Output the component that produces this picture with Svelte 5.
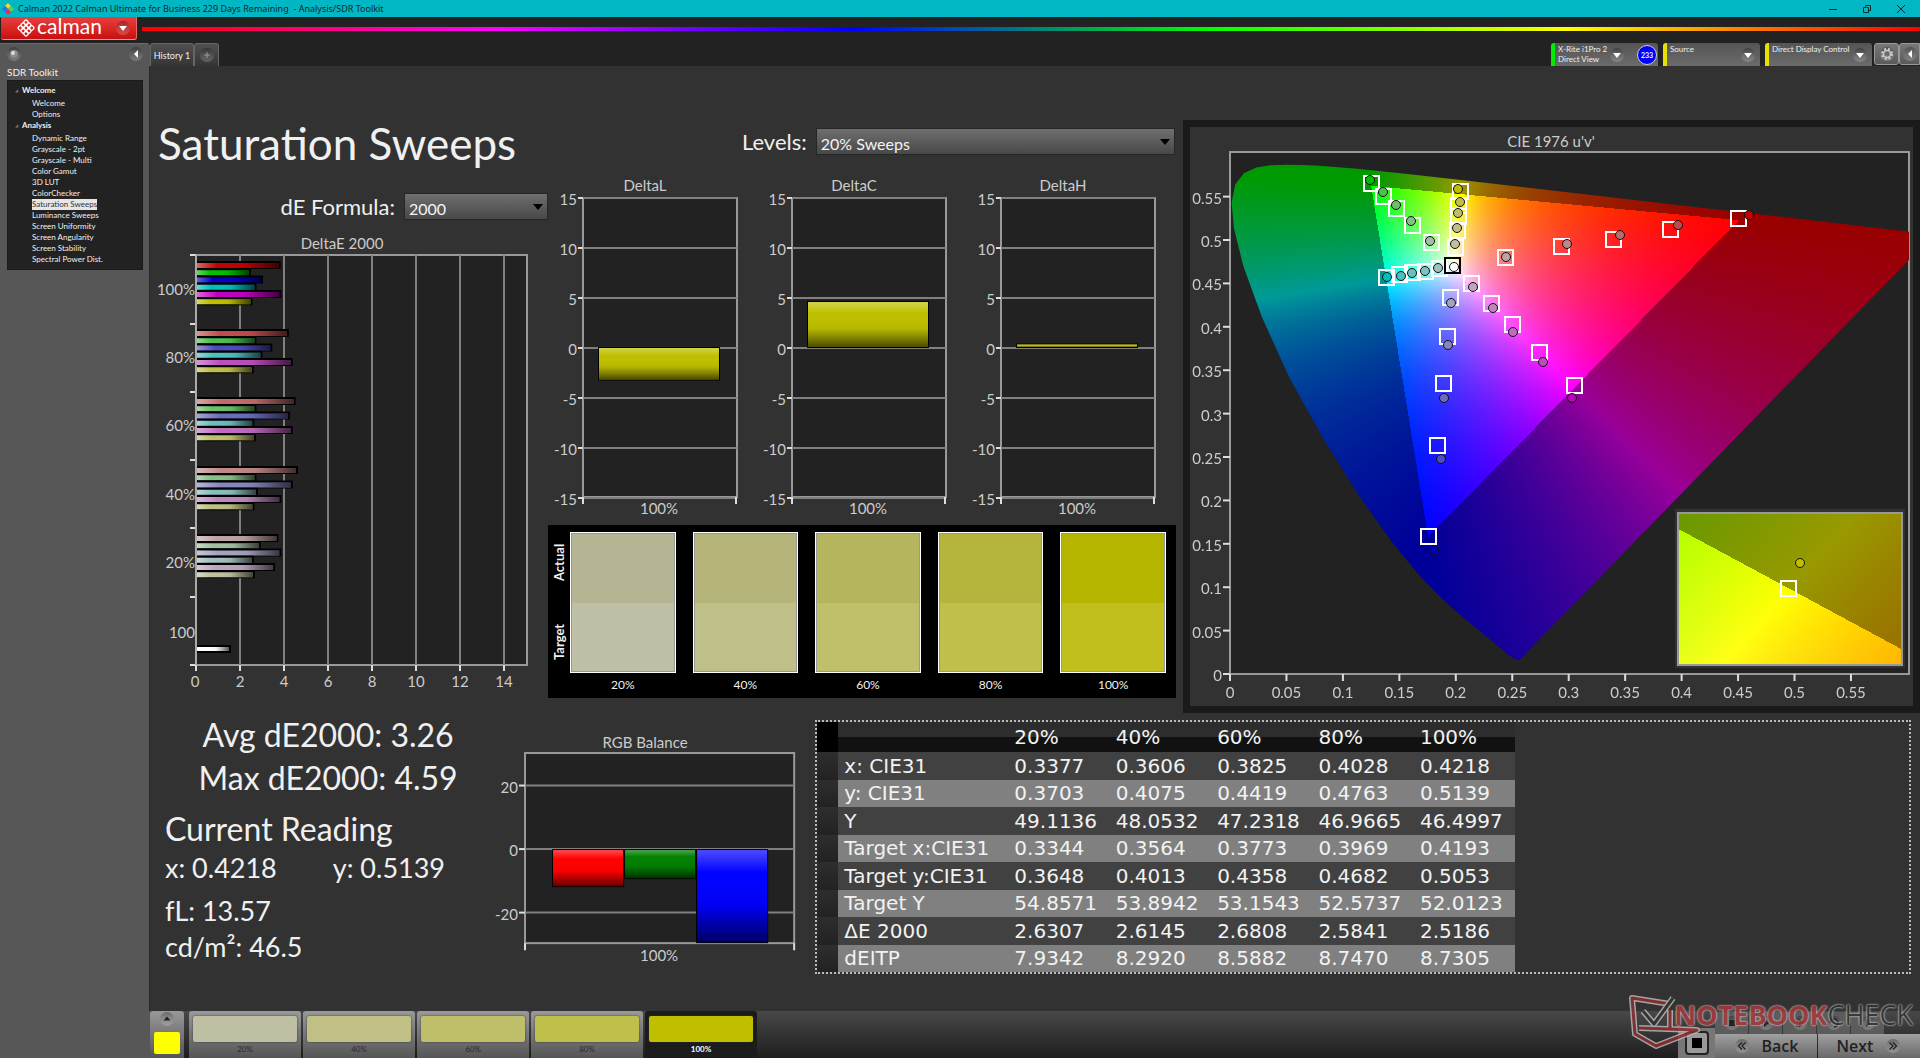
<script lang="ts">
	type Point = [number, number];

	const tree = [
		{
			name: 'Welcome',
			pages: ['Welcome', 'Options']
		},
		{
			name: 'Analysis',
			pages: [
				'Dynamic Range', 'Grayscale - 2pt', 'Grayscale - Multi', 'Color Gamut', '3D LUT', 'ColorChecker',
				'Saturation Sweeps', 'Luminance Sweeps', 'Screen Uniformity', 'Screen Angularity',
				'Screen Stability', 'Spectral Power Dist.'
			]
		}
	];
	let currentPage = $state('Saturation Sweeps');

	const levels = ['20%', '40%', '60%', '80%', '100%'];
	let currentLevel = $state('100%');

	// channel value of the unsaturated components, per sweep level
	const lows: Record<string, number> = { '20%': 163, '40%': 134, '60%': 107, '80%': 76, '100%': 0 };
	const hues: Record<string, number[]> = {
		red: [1, 0, 0],
		green: [0, 1, 0],
		blue: [0, 0, 1],
		cyan: [0, 1, 1],
		magenta: [1, 0, 1],
		yellow: [1, 1, 0]
	};

	function sweepColor(hue: string, level: string) {
		return `rgb(${hues[hue].map((on) => (on ? 191 : lows[level])).join(',')})`;
	}

	const deltaE = [
		{ level: '100%', top: 33, values: [3.8, 2.45, 3.0, 2.7, 3.83, 2.52] },
		{ level: '80%', top: 101, values: [4.17, 2.7, 3.42, 2.97, 4.35, 2.58] },
		{ level: '60%', top: 169, values: [4.48, 2.7, 4.23, 2.6, 4.35, 2.68] },
		{ level: '40%', top: 238, values: [4.59, 2.7, 4.35, 2.77, 3.83, 2.61] },
		{ level: '20%', top: 306, values: [3.7, 2.9, 3.83, 2.58, 3.55, 2.63] }
	];
	const hueNames = Object.keys(hues);

	const deltas = [
		{ name: 'DeltaL', value: -3.25 },
		{ name: 'DeltaC', value: 4.6 },
		{ name: 'DeltaH', value: 0.35 }
	];

	const swatches = [
		{ level: '20%', actual: '#b5b594', target: '#bfbfa5' },
		{ level: '40%', actual: '#b5b57a', target: '#bfbf88' },
		{ level: '60%', actual: '#b5b55e', target: '#bfbf6c' },
		{ level: '80%', actual: '#b5b53d', target: '#bfbf4c' },
		{ level: '100%', actual: '#b5b500', target: '#c0bf1d' }
	];

	const rows = [
		['x: CIE31', '0.3377', '0.3606', '0.3825', '0.4028', '0.4218'],
		['y: CIE31', '0.3703', '0.4075', '0.4419', '0.4763', '0.5139'],
		['Y', '49.1136', '48.0532', '47.2318', '46.9665', '46.4997'],
		['Target x:CIE31', '0.3344', '0.3564', '0.3773', '0.3969', '0.4193'],
		['Target y:CIE31', '0.3648', '0.4013', '0.4358', '0.4682', '0.5053'],
		['Target Y', '54.8571', '53.8942', '53.1543', '52.5737', '52.0123'],
		['ΔE 2000', '2.6307', '2.6145', '2.6808', '2.5841', '2.5186'],
		['dEITP', '7.9342', '8.2920', '8.5882', '8.7470', '8.7305']
	];

	const balance = [
		{ id: 'bal-red', x: 78, height: 38 },
		{ id: 'bal-green', x: 150, height: 30 },
		{ id: 'bal-blue', x: 222, height: 94 }
	];

	// CIE 1976 plot: 679 x 522 drawing units, 0.6014 wide and high
	const plotW = 679;
	const plotH = 522;
	const plotRange = 0.6014;
	const ticks = Array.from({ length: 12 }, (_, i) => Number((i * 0.05).toFixed(2)));

	const locus: Point[] = [
		[0.2568, 0.0166], [0.2557, 0.0159], [0.2522, 0.0169], [0.2461, 0.0226], [0.2347, 0.035],
		[0.2161, 0.0549], [0.2033, 0.0688], [0.1877, 0.0871], [0.169, 0.1119], [0.1441, 0.151],
		[0.1147, 0.2044], [0.0828, 0.2708], [0.0521, 0.3427], [0.0282, 0.4117], [0.0119, 0.4698],
		[0.0035, 0.5131], [0.0014, 0.5432], [0.0046, 0.5638], [0.0123, 0.577], [0.0231, 0.5837],
		[0.036, 0.5861], [0.0501, 0.5868], [0.0643, 0.5865], [0.0792, 0.5856], [0.1127, 0.5821],
		[0.1531, 0.5766], [0.2026, 0.5694], [0.2623, 0.5604], [0.3315, 0.5501], [0.4035, 0.5393],
		[0.4692, 0.5296], [0.5203, 0.5219], [0.583, 0.5125], [0.6234, 0.5065]
	];

	const sweeps: { hue: string; targets: Point[]; readings: Point[] }[] = [
		{
			hue: 'green',
			targets: [[201, 90], [182, 73], [166, 56], [153, 44], [141, 31]],
			readings: [[200, 89], [181, 69], [166, 53], [153, 40], [140, 28]]
		},
		{
			hue: 'yellow',
			targets: [[225, 95], [227, 78], [228, 64], [228, 53], [230, 39]],
			readings: [[225, 92], [227, 76], [228, 61], [230, 50], [228, 37]]
		},
		{
			hue: 'cyan',
			targets: [[209, 116], [195, 119], [182, 120], [169, 122], [156, 125]],
			readings: [[208, 116], [195, 119], [182, 121], [171, 124], [157, 125]]
		},
		{
			hue: 'red',
			targets: [[275, 105], [331, 94], [383, 87], [440, 77], [508, 66]],
			readings: [[276, 105], [337, 92], [390, 83], [448, 73], [519, 63]]
		},
		{
			hue: 'magenta',
			targets: [[241, 131], [261, 151], [282, 172], [309, 200], [344, 233]],
			readings: [[243, 135], [263, 156], [283, 180], [313, 210], [342, 246]]
		},
		{
			hue: 'blue',
			targets: [[220, 145], [217, 184], [213, 231], [207, 293], [198, 384]],
			readings: [[221, 151], [218, 193], [214, 246], [211, 307], [204, 398]]
		}
	];

	function xyToRgb(x: number, y: number) {
		const X = x / y;
		const Z = (1 - x - y) / y;
		const lin = [
			3.2406 * X - 1.5372 - 0.4986 * Z,
			-0.9689 * X + 1.8758 + 0.0415 * Z,
			0.0557 * X - 0.204 + 1.057 * Z
		];
		// colours outside the Rec.709 triangle are dimmed
		const scale = Math.min(...lin) < 0 ? 153 : 255;
		const peak = Math.max(...lin);
		return lin.map((c) => (scale * Math.max(c, 0)) / peak);
	}

	function paint(canvas: HTMLCanvasElement, toXy: (px: number, py: number) => Point) {
		const ctx = canvas.getContext('2d')!;
		const image = ctx.createImageData(canvas.width, canvas.height);
		for (let j = 0; j < canvas.height; j++) {
			for (let i = 0; i < canvas.width; i++) {
				const [x, y] = toXy((i + 0.5) / canvas.width, (j + 0.5) / canvas.height);
				const rgb = xyToRgb(x, y);
				const at = (j * canvas.width + i) * 4;
				image.data[at] = rgb[0];
				image.data[at + 1] = rgb[1];
				image.data[at + 2] = rgb[2];
				image.data[at + 3] = 255;
			}
		}
		ctx.putImageData(image, 0, 0);
	}

	function paintDiagram(canvas: HTMLCanvasElement) {
		paint(canvas, (px, py) => {
			const u = px * plotRange;
			const v = (1 - py) * plotRange;
			const d = 6 * u - 16 * v + 12;
			return [(9 * u) / d, (4 * v) / d];
		});
	}

	// the inset shows a 0.05 wide window of the xy plane round the current target
	function paintInset(canvas: HTMLCanvasElement) {
		paint(canvas, (px, py) => [0.4193 + (px - 0.5) * 0.05, 0.5053 - (py - 0.5) * 0.05]);
	}

	const locusPath = locus
		.map(([u, v]) => `${((u / plotRange) * plotW).toFixed(1)},${((1 - v / plotRange) * plotH).toFixed(1)}`)
		.join(' ');
</script>

{#snippet knob(kind: string)}
	<svg class="knob" viewBox="0 0 16 16" width="16" height="16" aria-hidden="true">
		<circle cx="8" cy="8" r="7" fill="url(#knob-fill)" />
		{#if kind === 'down'}
			<path d="M4 6h8l-4 5z" fill="#fff" />
		{:else if kind === 'left'}
			<path d="M10 4v8L6 8z" fill="#fff" />
		{:else if kind === 'plus'}
			<path d="M8 5v6M5 8h6" stroke="#999" />
		{:else if kind === 'dot'}
			<circle cx="8" cy="8" r="4" fill="#8c8c8c" />
			<circle cx="7" cy="7" r="2" fill="#ddd" />
		{:else if kind === 'gear'}
			<circle cx="8" cy="8" r="5" fill="none" stroke="#ccc" stroke-width="2" stroke-dasharray="2 2" />
			<circle cx="8" cy="8" r="3.5" fill="none" stroke="#ccc" stroke-width="1.5" />
		{:else if kind === 'up'}
			<path d="M4.5 9.5h7L8 5.5z" fill="#222" />
		{:else if kind === 'prev'}
			<path d="M8 4.5 4.5 8 8 11.5M11.500 4.500 8 8l3.500 3.500" fill="none" stroke="#222" stroke-width="1.3" />
		{:else if kind === 'next'}
			<path d="M4.5 4.5 8 8l-3.5 3.5M8 4.5 11.5 8 8 11.5" fill="none" stroke="#222" stroke-width="1.3" />
		{:else if kind === 'stop'}
			<path d="M5 5h6v6H5z" fill="#222" />
		{:else if kind === 'play'}
			<path d="M6 4l5 4-5 4z" fill="#222" />
		{:else if kind === 'step'}
			<path d="M5 4v8M7 4l5 4-5 4z" fill="#222" stroke="#222" />
		{:else if kind === 'loop'}
			<path d="M4 8a4 4 0 1 1 4 4" fill="none" stroke="#222" stroke-width="1.5" />
		{/if}
	</svg>
{/snippet}

<svg class="defs" width="0" height="0" aria-hidden="true">
	<defs>
		<linearGradient id="knob-fill" x2="0" y2="1">
			<stop offset="0" stop-color="#000" stop-opacity=".3" />
			<stop offset="1" stop-color="#fff" stop-opacity=".2" />
		</linearGradient>
		<linearGradient id="gloss-x">
			<stop offset="0" stop-color="#fff" stop-opacity=".4" />
			<stop offset=".25" stop-color="#fff" stop-opacity="0" />
			<stop offset=".6" stop-color="#000" stop-opacity=".05" />
			<stop offset="1" stop-color="#000" stop-opacity=".65" />
		</linearGradient>
		<linearGradient id="gloss-y" x2="0" y2="1">
			<stop offset="0" stop-color="#fff" stop-opacity=".3" />
			<stop offset=".25" stop-color="#fff" stop-opacity="0" />
			<stop offset=".6" stop-color="#000" stop-opacity=".05" />
			<stop offset="1" stop-color="#000" stop-opacity=".6" />
		</linearGradient>
	</defs>
</svg>

<div class="app">
	<div class="titlebar">
		<svg width="12" height="12" viewBox="0 0 12 12" aria-hidden="true">
			<path d="M6 0l3 3-3 3-3-3z" fill="#ffd21f" />
			<path d="M3 3l3 3-3 3-3-3z" fill="#2f6de0" />
			<path d="M9 3l3 3-3 3-3-3z" fill="#4fd64a" />
			<path d="M6 6l3 3-3 3-3-3z" fill="#e8286c" />
		</svg>
		<span class="window-title">Calman 2022 Calman Ultimate for Business 229 Days Remaining&nbsp; - Analysis/SDR Toolkit</span>
		<div class="window-buttons">
			<button aria-label="Minimize"><svg width="10" height="10" viewBox="0 0 10 10"><path d="M1 5.5h8" /></svg></button>
			<button aria-label="Restore"><svg width="10" height="10" viewBox="0 0 10 10"><path d="M1.5 3.5h5v5h-5zM3.5 3.5v-2h5v5h-2" /></svg></button>
			<button aria-label="Close"><svg width="10" height="10" viewBox="0 0 10 10"><path d="M1 1l8 8M9 1L1 9" /></svg></button>
		</div>
	</div>

	<header class="brandbar">
		<button class="brand">
			<svg width="18" height="18" viewBox="0 0 18 18" aria-hidden="true">
				<g transform="rotate(45 9 9)" fill="none" stroke="#fff" stroke-width="1.3">
					{#each [3, 7, 11] as gx}
						{#each [3, 7, 11] as gy}
							<rect x={gx} y={gy} width="4" height="4" rx="1.4" />
						{/each}
					{/each}
				</g>
			</svg>
			<span>calman</span>
			{@render knob('down')}
		</button>
		<div class="rainbow"></div>
	</header>

	<div class="body">
		<aside class="sidebar">
			<div class="sidebar-tools">
				<button aria-label="Record">{@render knob('dot')}</button>
				<button aria-label="Collapse">{@render knob('left')}</button>
			</div>
			<h2>SDR Toolkit</h2>
			<nav class="tree">
				{#each tree as group}
					<div class="group"><span class="twisty">◢</span>{group.name}</div>
					<ul>
						{#each group.pages as page}
							<li>
								<button
									class:selected={page === currentPage && group.name === 'Analysis'}
									onclick={() => (currentPage = page)}>{page}</button>
							</li>
						{/each}
					</ul>
				{/each}
			</nav>
		</aside>

		<div class="content">
			<div class="tabbar">
				<button class="tab">History 1</button>
				<button class="tab add" aria-label="Add history">{@render knob('plus')}</button>
				<div class="devices">
					<button class="device meter">
						<span>X-Rite i1Pro 2<br />Direct View</span>
						{@render knob('down')}
						<b class="badge">233</b>
					</button>
					<button class="device source"><span>Source</span>{@render knob('down')}</button>
					<button class="device display"><span>Direct Display Control</span>{@render knob('down')}</button>
					<div class="corner">
						<button aria-label="Settings">{@render knob('gear')}</button>
						<button aria-label="Expand">{@render knob('left')}</button>
					</div>
				</div>
			</div>

			<main>
				<div class="top">
					<section class="errors">
						<h1>Saturation Sweeps</h1>
						<div class="field formula">
							<label for="formula">dE Formula:</label>
							<div class="dropdown">
								<select id="formula"><option>2000</option></select>
								<svg width="10" height="6" viewBox="0 0 10 6" aria-hidden="true"><path d="M0 0h10L5 6z" /></svg>
							</div>
						</div>
						<svg class="chart" viewBox="0 0 398 462" role="img" aria-label="DeltaE 2000">
							<text x="192" y="11" class="mid">DeltaE 2000</text>
							<rect x="46" y="23" width="331" height="410" class="plot" />
							{#each [2, 4, 6, 8, 10, 12, 14] as n}
								<path d="M{46 + n * 22} 23v410" class="grid" />
								<path d="M{46 + n * 22} 433v6" class="tick" />
								<text x={46 + n * 22} y="449" class="mid">{n}</text>
							{/each}
							<path d="M46 433v6" class="tick" />
							<text x="45" y="449" class="mid">0</text>
							{#each [23, 92, 160, 228, 296, 365, 433] as y}
								<path d="M40 {y}h6" class="tick" />
							{/each}
							{#each deltaE as row}
								<text x="45" y={row.top + 24} class="end">{row.level}</text>
								{#each row.values as value, i}
									<rect x="46" y={row.top - 4 + i * 7.25} width={value * 22 + 1} height="8" />
									<rect x="47" y={row.top - 2 + i * 7.25} width={value * 22 - 2} height="5" fill={sweepColor(hueNames[i], row.level)} />
									<rect x="47" y={row.top - 2 + i * 7.25} width={value * 22 - 2} height="5" fill="url(#gloss-x)" />
								{/each}
							{/each}
							<text x="45" y="400" class="end">100</text>
							<rect x="46" y="413" width="35" height="8" />
							<rect x="47" y="415" width="32" height="4" fill="#fff" />
							<rect x="47" y="415" width="32" height="4" fill="url(#gloss-x)" />
							<path d="M46 23v410" class="axis" />
						</svg>
					</section>

					<section class="middle">
						<div class="field levels">
							<label for="levels">Levels:</label>
							<div class="dropdown">
								<select id="levels"><option>20% Sweeps</option></select>
								<svg width="10" height="6" viewBox="0 0 10 6" aria-hidden="true"><path d="M0 0h10L5 6z" /></svg>
							</div>
						</div>

						<div class="deltas">
							{#each deltas as delta}
								<svg class="chart" viewBox="0 0 209 346" role="img" aria-label={delta.name}>
									<text x="97" y="9" class="mid">{delta.name}</text>
									<rect x="35" y="22" width="154" height="299" class="plot" />
									{#each [15, 10, 5, 0, -5, -10, -15] as n}
										<path d="M35 {172 - n * 10}h154" class="grid" />
										<path d="M30 {172 - n * 10}h5" class="tick" />
										<text x="29" y={173 - n * 10} class="end">{n}</text>
									{/each}
									<path d="M35 321v7M188 321v7" class="tick" />
									<rect x="50" y={172 - Math.max(delta.value, 0) * 10 - 1} width="122" height={Math.abs(delta.value) * 10 + 1} />
									<rect x="51" y={172 - Math.max(delta.value, 0) * 10} width="120" height={Math.abs(delta.value) * 10 - 1} fill="#bfbf00" />
									<rect x="51" y={172 - Math.max(delta.value, 0) * 10} width="120" height={Math.abs(delta.value) * 10 - 1} fill="url(#gloss-y)" />
									<text x="111" y="332" class="mid">100%</text>
								</svg>
							{/each}
						</div>

						<div class="swatches">
							<div class="sides"><span>Actual</span><span>Target</span></div>
							{#each swatches as swatch}
								<figure>
									<div class="swatch">
										<div style="background: {swatch.actual}"></div>
										<div style="background: {swatch.target}"></div>
									</div>
									<figcaption>{swatch.level}</figcaption>
								</figure>
							{/each}
						</div>
					</section>

					<section class="cie">
						<svg class="chart" viewBox="0 0 723 579" role="img" aria-label="CIE 1976 u'v'">
							<defs>
								<clipPath id="locus"><polygon points={locusPath} /></clipPath>
								<clipPath id="frame"><rect width={plotW} height={plotH} /></clipPath>
							</defs>
							<text x="361" y="14" class="mid">CIE 1976 u'v'</text>
							<g transform="translate(40 25)">
								<rect width={plotW} height={plotH} class="plot" />
								<g clip-path="url(#frame)">
									<g clip-path="url(#locus)">
										<foreignObject width={plotW} height={plotH}>
											<canvas width={plotW} height={plotH} {@attach paintDiagram}></canvas>
										</foreignObject>
									</g>
								</g>
								{#each ticks as t}
									<path d="M{(t / plotRange) * plotW} {plotH}v7" class="tick" />
									<text x={(t / plotRange) * plotW} y={plotH + 18} class="mid">{t}</text>
									<path d="M-7 {plotH - (t / plotRange) * plotH}h7" class="tick" />
									<text x="-8" y={plotH + 1 - (t / plotRange) * plotH} class="end">{t}</text>
								{/each}
								{#each sweeps as sweep}
									{#each sweep.targets as [x, y]}
										<rect x={x - 7} y={y - 7} width="15" height="15" class="target" />
									{/each}
								{/each}
								<rect x="215" y="106" width="15" height="15" class="target white" />
								{#each sweeps as sweep}
									{#each sweep.readings as [x, y], i}
										<circle cx={x} cy={y} r="4.5" fill={sweepColor(sweep.hue, levels[i])} class="reading" />
									{/each}
								{/each}
								<circle cx="224" cy="115" r="4.5" fill="#fff" class="reading" />

								<g transform="translate(448 361)">
									<rect x="-3" y="-4" width="230" height="159" fill="#323232" />
									<foreignObject width="224" height="152">
										<canvas width="224" height="152" {@attach paintInset}></canvas>
									</foreignObject>
									<rect width="224" height="152" class="inset" />
									<rect x="103" y="68" width="15" height="15" class="target" />
									<circle cx="122" cy="50" r="4.5" fill="#bfbf00" class="reading" />
								</g>
							</g>
						</svg>
					</section>
				</div>

				<div class="bottom">
					<section class="readings">
						<p class="big center">Avg dE2000: 3.26</p>
						<p class="big center">Max dE2000: 4.59</p>
						<h2>Current Reading</h2>
						<div class="pair"><p>x: 0.4218</p><p>y: 0.5139</p></div>
						<p>fL: 13.57</p>
						<p>cd/m²: 46.5</p>
					</section>

					<section class="balance">
						<svg class="chart" viewBox="0 0 305 250" role="img" aria-label="RGB Balance">
							<text x="145" y="23" class="mid">RGB Balance</text>
							<rect x="25" y="34" width="269" height="190" class="plot" />
							{#each [20, 0, -20] as n}
								<path d="M25 {130 - n * 3.175}h269" class="grid" />
								<path d="M19 {130 - n * 3.175}h6" class="tick" />
								<text x="18" y={131 - n * 3.175} class="end">{n}</text>
							{/each}
							<path d="M25 224v7M294 224v7" class="tick" />
							{#each balance as bar}
								<rect x={bar.x - 26} y="130" width="72" height={bar.height} />
								<rect x={bar.x - 25} y="131" width="70" height={bar.height - 2} class={bar.id} />
								<rect x={bar.x - 25} y="131" width="70" height={bar.height - 2} fill="url(#gloss-y)" />
							{/each}
							<text x="159" y="236" class="mid">100%</text>
						</svg>
					</section>

					<section class="data">
						<table>
							<thead>
								<tr>
									<th class="handle"></th>
									<th></th>
									{#each levels as level}
										<th scope="col">{level}</th>
									{/each}
								</tr>
							</thead>
							<tbody>
								{#each rows as [name, ...values]}
									<tr>
										<td class="handle"></td>
										<th scope="row">{name}</th>
										{#each values as value}
											<td>{value}</td>
										{/each}
									</tr>
								{/each}
							</tbody>
						</table>
					</section>
				</div>
			</main>

			<footer>
				<button class="current" aria-label="Current pattern">
					{@render knob('up')}
					<span></span>
				</button>
				<div class="patches">
					{#each swatches as swatch}
						<button class="patch" class:active={swatch.level === currentLevel} onclick={() => (currentLevel = swatch.level)}>
							<span style="background: {sweepColor('yellow', swatch.level)}"></span>
							{swatch.level}
						</button>
					{/each}
				</div>
				<div class="transport">
					<button class="record" aria-label="Pattern window"><span></span></button>
					<div class="controls">
						<div class="media">
							{#each ['stop', 'play', 'step', 'loop', 'play'] as kind}
								<button aria-label={kind}>{@render knob(kind)}</button>
							{/each}
						</div>
						<div class="paging">
							<button>{@render knob('prev')}Back</button>
							<button>Next{@render knob('next')}</button>
						</div>
					</div>
				</div>
				<div class="watermark">
					<svg width="72" height="56" viewBox="0 0 72 56" aria-hidden="true">
						<g fill="none" stroke-linejoin="round">
							<path d="M42 10 4 4l3 36 21 12 41-16-58-2M42 16v18" stroke="#b9b9b9" stroke-width="6" />
							<path d="M42 10 4 4l3 36 21 12 41-16-58-2M42 16v18" stroke="#8f2d31" stroke-width="3" />
							<path d="M15 17l11 13L45 4" stroke="#b9b9b9" stroke-width="6" />
							<path d="M15 17l11 13L45 4" stroke="#333" stroke-width="3" />
						</g>
					</svg>
					<span><b>NOTEBOOK</b>CHECK</span>
				</div>
			</footer>
		</div>
	</div>
</div>

<style>
	:global(body) {
		background: #222;
	}

	.app {
		display: flex;
		flex-direction: column;
		min-height: 100vh;
		font-family: Lato, 'Open Sans', sans-serif;
		color: #f0f0f0;
	}

	.defs {
		position: absolute;
	}

	button {
		font: inherit;
		color: inherit;
		background: none;
		border: 0;
		padding: 0;
	}

	h1, h2, p, ul, figure {
		margin: 0;
		padding: 0;
		font-weight: 400;
	}

	.knob {
		display: block;
		flex: none;
	}

	/* window chrome */
	.titlebar {
		display: flex;
		align-items: center;
		gap: 4px;
		height: 17px;
		padding-left: 2px;
		background: #00b7c3;
		color: #10282a;
		font-size: 9px;
		font-family: 'Noto Sans', sans-serif;
	}

	.window-buttons {
		display: flex;
		margin-left: auto;
		padding-right: 2px;
	}

	.window-buttons button {
		display: grid;
		place-items: center;
		width: 34px;
		height: 17px;
	}

	.window-buttons path {
		fill: none;
		stroke: #0b2a2d;
	}

	.brandbar {
		display: flex;
		align-items: flex-start;
		gap: 5px;
		height: 26px;
		padding-left: 1px;
		background: #222;
	}

	.brand {
		display: flex;
		align-items: center;
		width: 136px;
		height: 23px;
		padding: 0 5px 0 16px;
		border-radius: 0 0 3px 3px;
		border-bottom: 1px solid #f88;
		border-right: 1px solid #e66;
		background: linear-gradient(#e8403e, #c8100f);
		box-sizing: border-box;
		font-size: 21px;
		line-height: 20px;
		color: #fff;
	}

	.brand span {
		flex: 1;
		padding: 0 0 4px 2px;
		text-align: left;
	}

	.rainbow {
		flex: 1;
		height: 4px;
		margin-top: 10px;
		background: linear-gradient(90deg, #f00, #f0f 20%, #00f 40%, #0f0 60%, #ff0 80%, #f00);
	}

	.body {
		display: flex;
		flex: 1;
	}

	/* sidebar */
	.sidebar {
		flex: none;
		width: 150px;
		background: #575757;
		border-top: 1px solid #6b6b6b;
		border-radius: 0 4px 0 0;
		box-sizing: border-box;
	}

	.sidebar-tools {
		display: flex;
		justify-content: space-between;
		padding: 2px 6px 0;
	}

	.sidebar h2 {
		padding: 4px 7px 2px;
		font-size: 10px;
		line-height: 12px;
	}

	.tree {
		margin: 0 7px;
		padding: 4px 0 4px 7px;
		background: #222;
		border: 1px solid #1b1b1b;
		font-size: 8px;
		line-height: 11px;
	}

	.group {
		display: flex;
		gap: 4px;
		font-weight: 700;
	}

	.twisty {
		color: #777;
		font-size: 4px;
		line-height: 12px;
	}

	.tree ul {
		list-style: none;
		padding: 1px 0 0 17px;
	}

	.tree li {
		display: flex;
	}

	.tree .selected {
		background: #e6e6e6;
		color: #333;
	}

	/* tabs and devices */
	.content {
		display: flex;
		flex-direction: column;
		flex: 1;
		min-width: 0;
	}

	.tabbar {
		display: flex;
		height: 23px;
		background: #222;
	}

	.tab {
		display: grid;
		place-items: center;
		width: 44px;
		border: 1px solid #666;
		border-bottom: 0;
		border-radius: 3px 3px 0 0;
		background: linear-gradient(#4f4f4f, #353535);
		font-size: 9px;
	}

	.tab.add {
		width: 25px;
	}

	.devices {
		display: flex;
		gap: 5px;
		margin-left: auto;
	}

	.device {
		display: flex;
		align-items: center;
		width: 97px;
		padding: 0 4px 0 3px;
		border-left: 4px solid #e8e000;
		border-radius: 3px 3px 0 0;
		background: linear-gradient(#555, #6b6b6b);
		box-sizing: border-box;
		font-size: 8px;
		line-height: 10px;
		text-align: left;
	}

	.device span {
		flex: 1;
		align-self: flex-start;
		padding-top: 1px;
		white-space: nowrap;
	}

	.device.meter {
		width: 107px;
		padding-right: 1px;
		border-color: #0e0;
	}

	.device.display {
		width: 107px;
	}

	.badge {
		display: grid;
		place-items: center;
		width: 18px;
		height: 18px;
		margin-left: 12px;
		border: 1px solid #ccd;
		border-radius: 50%;
		background: #00f;
		font-size: 7px;
	}

	.corner {
		display: flex;
		margin-left: -3px;
	}

	.corner button {
		display: grid;
		place-items: center;
		width: 25px;
		height: 22px;
		border: 1px solid #999;
		border-radius: 3px;
		background: linear-gradient(#777, #5a5a5a);
		box-sizing: border-box;
	}

	.corner button + button {
		width: 21px;
		border-radius: 3px 0 0 3px;
	}

	/* workspace */
	main {
		flex: 1;
		background: #323232;
		border-left: 1px solid #282828;
		margin-left: -1px;
	}

	.top {
		display: grid;
		grid-template-columns: 398fr 635fr 737fr;
	}

	.bottom {
		display: grid;
		grid-template-columns: 350fr 305fr 1105fr;
		padding-right: 9px;
	}

	.errors {
		padding-top: 53px;
	}

	h1 {
		padding-left: 8px;
		font-size: 44px;
		line-height: 48px;
		white-space: nowrap;
	}

	.field {
		display: flex;
		align-items: center;
		gap: 9px;
		font-size: 22px;
		line-height: 27px;
	}

	.formula {
		margin: 26px 0 12px;
		justify-content: flex-end;
	}

	.formula .dropdown {
		width: 144px;
	}

	.levels {
		padding: 62px 8px 21px 194px;
	}

	.levels .dropdown {
		flex: 1;
	}

	.dropdown {
		position: relative;
	}

	select {
		appearance: none;
		display: block;
		width: 100%;
		height: 27px;
		padding: 3px 4px 0;
		border: 1px solid #262626;
		border-radius: 0;
		background: linear-gradient(#6f6f6f, #484848);
		color: #f4f4f4;
		font: 16px Lato, 'Open Sans', sans-serif;
	}

	.dropdown svg {
		position: absolute;
		right: 5px;
		top: 11px;
		pointer-events: none;
	}

	.chart {
		display: block;
		width: 100%;
		height: auto;
		overflow: visible;
	}

	.chart text {
		fill: #ccc;
		font-size: 15px;
		dominant-baseline: central;
	}

	.mid {
		text-anchor: middle;
	}

	.end {
		text-anchor: end;
	}

	.plot {
		fill: #222;
		stroke: #999;
		stroke-width: 2;
	}

	.grid {
		stroke: #808080;
		stroke-width: 2;
	}

	.axis {
		stroke: #aaa;
		stroke-width: 2;
	}

	.tick {
		stroke: #ddd;
		stroke-width: 2;
	}

	.deltas {
		display: grid;
		grid-template-columns: repeat(3, 1fr);
		padding-right: 8px;
	}

	.swatches {
		display: flex;
		gap: 17px;
		margin: 3px 7px 0 0;
		padding: 7px 10px 6px 4px;
		background: #000;
		font-size: 12px;
		line-height: 15px;
		font-weight: 700;
	}

	.sides {
		display: flex;
		flex-direction: row-reverse;
		justify-content: space-between;
		writing-mode: vertical-rl;
		transform: rotate(180deg);
		width: 15px;
		margin: 0 -14px 20px 0;
		padding: 12px 0;
		font-size: 13px;
	}

	.swatches figure {
		flex: 1;
		text-align: center;
	}

	.swatch {
		display: flex;
		flex-direction: column;
		height: 139px;
		border: 1px solid #fff;
		outline: 1px solid #999;
		outline-offset: -2px;
	}

	.swatch div {
		flex: 1;
	}

	.swatches figcaption {
		padding-top: 4px;
	}

	.cie {
		margin-top: 54px;
		border: 7px solid #1a1a1a;
	}

	canvas {
		display: block;
	}

	.target {
		fill: none;
		stroke: #fff;
		stroke-width: 2;
	}

	.target.white {
		stroke: #000;
	}

	.reading {
		stroke: #111;
		stroke-width: 1;
	}

	.inset {
		fill: none;
		stroke: #999;
		stroke-width: 2;
	}

	/* readings */
	.readings {
		padding-left: 15px;
		font-size: 27px;
		line-height: 36px;
		white-space: nowrap;
	}

	.readings .big {
		font-size: 32px;
		line-height: 43px;
	}

	.readings .center {
		padding-right: 9px;
		text-align: center;
	}

	.readings h2 {
		padding-top: 8px;
		font-size: 32px;
		line-height: 43px;
	}

	.pair {
		display: flex;
		gap: 56px;
		padding-bottom: 7px;
	}

	.balance {
		padding-top: 6px;
	}

	.bal-red {
		fill: #f00;
	}

	.bal-green {
		fill: #008000;
	}

	.bal-blue {
		fill: #00f;
	}

	.data {
		margin: 7px 0 0 10px;
		border: 2px dotted #bbb;
		min-width: 0;
	}

	table {
		border-collapse: collapse;
		font: 20px 'DejaVu Sans', sans-serif;
		color: #f2f2f2;
		table-layout: fixed;
		width: 698px;
		height: 250px;
	}

	th, td {
		height: 27px;
		padding: 0 0 0 6px;
		font-weight: 400;
		text-align: left;
		line-height: 24px;
		white-space: nowrap;
	}

	thead th {
		height: 30px;
		background: linear-gradient(#2d2d2d 50%, #111 50%);
	}

	thead th:nth-child(2) {
		width: 164px;
	}

	tbody tr {
		background: #414141;
	}

	tbody tr:nth-child(even) {
		background: #808080;
	}

	tbody .handle {
		background: linear-gradient(#2e2e2e, #222);
	}

	.handle {
		width: 15px;
	}

	thead .handle {
		background: #000;
	}

	/* pattern bar */
	footer {
		position: relative;
		display: flex;
		height: 47px;
		background: linear-gradient(#484848, #1e1e1e);
	}

	.current {
		display: flex;
		flex-direction: column;
		align-items: center;
		justify-content: space-between;
		width: 34px;
		padding: 0 0 4px;
		background: linear-gradient(#999, #555);
		border-radius: 3px 3px 0 0;
	}

	.current span {
		width: 26px;
		height: 22px;
		border-radius: 2px;
		background: #ff0;
	}

	.patches {
		display: flex;
		gap: 2px;
		margin-left: 5px;
	}

	.patch {
		display: flex;
		flex-direction: column;
		width: 112px;
		padding: 5px 4px 0;
		border-radius: 3px 3px 0 0;
		background: linear-gradient(#999, #555);
		color: #2a2a2a;
		font-size: 8px;
		line-height: 15px;
		text-align: center;
	}

	.patch span {
		height: 26px;
		border-radius: 2px;
		box-shadow: 0 0 2px #333;
	}

	.patch.active {
		background: #1c1c1c;
		color: #fff;
		font-weight: 700;
	}

	.transport {
		display: flex;
		align-items: flex-end;
		margin-left: auto;
	}

	.record {
		display: grid;
		place-items: center;
		width: 37px;
		height: 30px;
		background: #777;
	}

	.record span {
		width: 10px;
		height: 10px;
		border: 5px solid #999;
		outline: 2px solid #222;
		border-radius: 2px;
		background: #000;
	}

	.media {
		display: flex;
		padding-right: 35px;
	}

	.media button {
		display: grid;
		place-items: center;
		width: 33px;
		height: 22px;
		margin-right: 1px;
		background: #5c5c5c;
	}

	.paging {
		display: flex;
		gap: 1px;
	}

	.paging button {
		display: flex;
		align-items: center;
		justify-content: center;
		gap: 12px;
		width: 102px;
		height: 24px;
		background: linear-gradient(#a0a0a0, #686868);
		color: #222;
		font: 600 16px 'Open Sans', sans-serif;
	}

	.watermark {
		position: absolute;
		right: 7px;
		bottom: 8px;
		display: flex;
		align-items: flex-start;
		opacity: .85;
		pointer-events: none;
	}

	.watermark span {
		margin: 2px 0 0 -26px;
		font: 27px 'Open Sans', sans-serif;
		color: #333;
		text-shadow: 0 0 2px #ddd, 0 0 2px #ddd;
	}

	.watermark b {
		color: #a8383c;
	}
</style>
